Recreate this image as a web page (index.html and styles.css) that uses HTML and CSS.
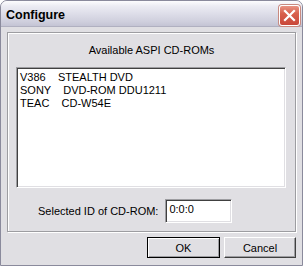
FILE: index.html
```html
<!DOCTYPE html>
<html>
<head>
<meta charset="utf-8">
<link rel="stylesheet" href="styles.css">
</head>
<body>
<div class="window">
  <div class="titlebar">
    <span class="title">Configure</span>
    <div class="close">
      <svg width="19" height="19" viewBox="0 0 19 19"><path d="M5 5 L14 14 M14 5 L5 14" stroke="#fff" stroke-width="2.2" stroke-linecap="square"/></svg>
    </div>
  </div>
  <div class="client">
    <div class="group">
      <div class="caption">Available ASPI CD-ROMs</div>
      <div class="listbox">
        <div class="item">V386    STEALTH DVD</div>
        <div class="item">SONY    DVD-ROM DDU1211</div>
        <div class="item">TEAC    CD-W54E</div>
      </div>
      <div class="idrow">
        <span class="idlabel">Selected ID of CD-ROM:</span>
        <div class="textbox">0:0:0</div>
      </div>
    </div>
    <div class="buttons">
      <div class="btn default">OK</div>
      <div class="btn cancel">Cancel</div>
    </div>
  </div>
</div>
</body>
</html>
```
FILE: styles.css
```css
html, body {
  margin: 0;
  padding: 0;
  background: #ffffff;
}
.window {
  width: 303px;
  height: 266px;
  box-sizing: border-box;
  border: 1px solid #8a8a9c;
  border-radius: 7px 7px 0 0;
  background: #e0dfe3;
  overflow: hidden;
  font-family: "Liberation Sans", Arial, sans-serif;
  font-size: 11px;
  color: #000;
  display: flex;
  flex-direction: column;
}
.titlebar {
  height: 25px;
  flex: none;
  display: flex;
  justify-content: space-between;
  align-items: flex-start;
  background: linear-gradient(#fdfdfe 0%, #ececf3 20%, #dedee9 50%, #d0d0de 80%, #c4c4d4 100%);
  border-bottom: 1px solid #b0b0c0;
}
.title {
  font-weight: bold;
  font-size: 12.5px;
  line-height: 25px;
  padding: 2px 0 0 5px;
  color: #000;
}
.close {
  width: 19px;
  height: 19px;
  margin-top: 4px;
  margin-right: 2px;
  border: 1px solid #fff;
  border-radius: 3px;
  box-shadow: 0 0 0 1px #c88a80;
  background: linear-gradient(#e89484 0%, #d8604c 40%, #c9483a 100%);
  display: flex;
}
.client {
  flex: 1;
  padding: 5px 6px 0 6px;
}
.group {
  border: 1px solid #9d9da1;
  box-shadow: inset 1px 1px #fff, 1px 1px #fff;
  padding: 11px 0 8px 0;
}
.caption {
  text-align: center;
  line-height: 13px;
}
.listbox {
  margin: 10px 0 0 8px;
  width: 270px;
  height: 121px;
  box-sizing: border-box;
  background: #fff;
  border-top: 1px solid #9d9da1;
  border-left: 1px solid #9d9da1;
  border-right: 1px solid #fff;
  border-bottom: 1px solid #fff;
  box-shadow: inset 1px 1px #404040, inset -1px -1px #e0dfe3;
  padding: 3px 3px;
}
.item {
  white-space: pre;
  line-height: 13px;
}
.idrow {
  margin: 11px 0 0 30px;
  display: flex;
  align-items: center;
  gap: 7px;
  height: 24px;
}
.textbox {
  width: 67px;
  height: 24px;
  box-sizing: border-box;
  background: #fff;
  border-top: 1px solid #9d9da1;
  border-left: 1px solid #9d9da1;
  border-right: 1px solid #fff;
  border-bottom: 1px solid #fff;
  box-shadow: inset 1px 1px #404040, inset -1px -1px #e0dfe3;
  padding: 3px 2px 0 3px;
  line-height: 13px;
}
.buttons {
  margin-top: 5px;
  display: flex;
  justify-content: flex-end;
  gap: 4px;
}
.btn {
  height: 21px;
  box-sizing: border-box;
  display: flex;
  align-items: center;
  justify-content: center;
  background: #e0dfe3;
}
.btn.default {
  width: 73px;
  border: 1px solid #000;
  box-shadow: inset 1px 1px #fff, inset -1px -1px #9d9da1;
}
.btn.cancel {
  width: 72px;
  border-top: 1px solid #fff;
  border-left: 1px solid #fff;
  border-right: 1px solid #404040;
  border-bottom: 1px solid #404040;
  box-shadow: inset -1px -1px #9d9da1;
}
```
